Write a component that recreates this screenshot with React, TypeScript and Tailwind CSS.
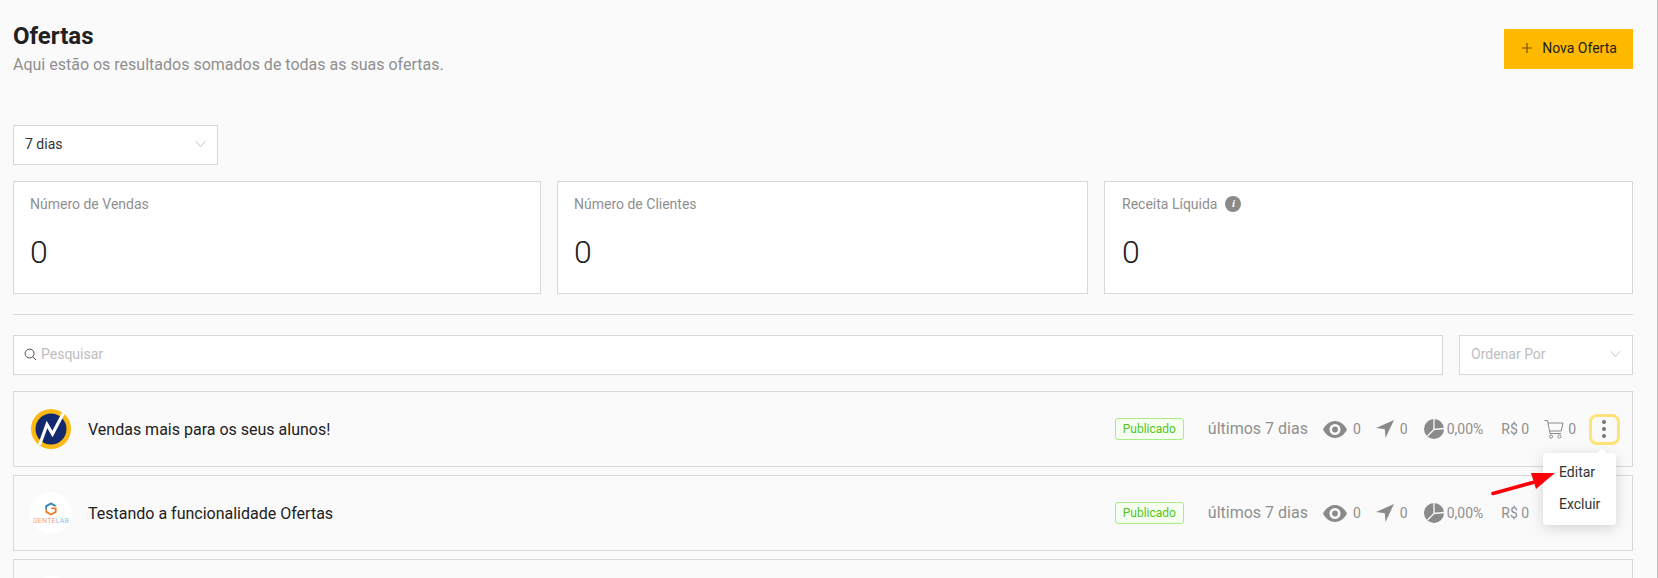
import React from "react";

const offers = [
  { name: "Vendas mais para os seus alunos!", logo: "n" },
  { name: "Testando a funcionalidade Ofertas", logo: "g" },
];

function Chevron({ className }: { className: string }) {
  return (
    <svg viewBox="0 0 12 8" className={className} fill="none" stroke="currentColor" strokeWidth="0.9">
      <path d="M1 1l5 6 5-6" />
    </svg>
  );
}

function NLogo() {
  return (
    <svg viewBox="0 0 40 40" className="w-10 h-10 shrink-0">
      <circle cx="20" cy="20" r="20" fill="#fdb913" />
      <circle cx="20" cy="20" r="15.5" fill="#12296e" />
      <path d="M8.5 36L16 15.5 21.5 25 33 3" fill="none" stroke="#fff" strokeWidth="3.2" />
    </svg>
  );
}

function GLogo() {
  return (
    <div className="w-[42px] h-[42px] -ml-[1px] -mr-[1px] rounded-full bg-white shrink-0 flex flex-col items-center justify-center">
      <svg viewBox="0 0 14 14" className="w-[14px] h-[14px]">
        <path d="M7 0.5L12.5 3.5 10.8 4.5 7 2.6 3 4.8V9.2L7 11.4 10.8 9.4V7H7.2V5.6H12.6V10.5L7 13.5 1.4 10.5V3.5z" fill="#ee7a24" />
        <path d="M7 0.5L12.5 3.5 10.8 4.5 7 2.6 3 4.8V7H1.4V3.5z" fill="#2f8fc9" />
      </svg>
      <div className="text-[7px] leading-[8px] tracking-[0.2px] mt-[1px] whitespace-nowrap">
        <span className="text-[#f2a27a]">GENTE</span>
        <span className="text-[#8cc4e8]">LAB</span>
      </div>
    </div>
  );
}

function EyeIcon() {
  return (
    <svg viewBox="0 0 24 17" className="w-6 h-[17px] shrink-0" fill="#8a8a8a">
      <path
        fillRule="evenodd"
        d="M12 0C6.5 0 2.4 3.8 0 8.5 2.4 13.2 6.5 17 12 17s9.6-3.8 12-8.5C21.6 3.8 17.5 0 12 0zm0 3a5.5 5.5 0 110 11 5.5 5.5 0 010-11zm0 2.6a2.9 2.9 0 100 5.8 2.9 2.9 0 000-5.8z"
      />
    </svg>
  );
}

function SendIcon() {
  return (
    <svg viewBox="0 0 18 18" className="w-[18px] h-[18px] shrink-0" fill="#8a8a8a">
      <path d="M18 0L9.5 18 8.8 9.2 0 8z" />
    </svg>
  );
}

function PieIcon() {
  return (
    <svg viewBox="0 0 20 20" className="w-5 h-5 shrink-0">
      <circle cx="10" cy="10" r="10" fill="#8a8a8a" />
      <path d="M10 0V10.5L20 9.5M10 10.5L3.5 17" fill="none" stroke="#fafafa" strokeWidth="1.3" />
    </svg>
  );
}

function CartIcon() {
  return (
    <svg viewBox="0 0 20 20" className="w-5 h-5 shrink-0" fill="none" stroke="#8a8a8a" strokeWidth="1">
      <path d="M0.5 1.5H3.5L6 14.5H17" />
      <path d="M4 4H19L17.2 12H5.5" />
      <circle cx="7" cy="17.5" r="1.6" />
      <circle cx="15.5" cy="17.5" r="1.6" />
    </svg>
  );
}

function OfferRow({ name, logo, open }: { name: string; logo: string; open?: boolean }) {
  return (
    <div className="relative h-[76px] border border-[#d8d8d8] flex items-center pl-[17px] pr-[12px]">
      {logo === "n" ? <NLogo /> : <GLogo />}
      <div className="ml-[17px] mt-[2px] text-base text-[#212121]">{name}</div>
      <div className="ml-auto flex items-center text-sm text-[#8f8f8f]">
        <span className="h-[22px] w-[69px] flex items-center justify-center rounded-[3px] border border-[#a8ec8a] bg-[#f6fff0] text-xs text-[#52c41a]">
          Publicado
        </span>
        <span className="ml-6 text-base">últimos 7 dias</span>
        <span className="ml-[15px]"><EyeIcon /></span>
        <span className="ml-[6px]">0</span>
        <span className="ml-[15px]"><SendIcon /></span>
        <span className="ml-[6px]">0</span>
        <span className="ml-[16px]"><PieIcon /></span>
        <span className="ml-[3px]">0,00%</span>
        <span className="ml-[18px]">R$ 0</span>
        {/* the open menu of the row above lies over these */}
        <span className={open ? "ml-[15px] flex items-center" : "ml-[15px] flex items-center invisible"}>
          <CartIcon />
          <span className="ml-[4px]">0</span>
        </span>
        <span
          className={
            open
              ? "ml-[13px] w-[31px] h-[31px] rounded-lg border-[3px] border-[#ffe27a] flex flex-col items-center justify-center gap-[3px] pr-[1px]"
              : "ml-[13px] w-[31px] h-[31px] flex flex-col items-center justify-center gap-[3px] invisible"
          }
        >
          <i className="block w-1 h-1 rounded-full bg-[#757575]" />
          <i className="block w-1 h-1 rounded-full bg-[#757575]" />
          <i className="block w-1 h-1 rounded-full bg-[#757575]" />
        </span>
      </div>
      {open && (
        <>
          <div className="absolute z-20 top-[61px] right-[16px] w-[73px] h-[72px] rounded-[4px] bg-white shadow-[0_3px_14px_rgba(0,0,0,0.16)] pl-[16px] pt-[3px] text-sm leading-[32px] text-[#333333]">
            <div className="absolute -top-[3px] right-[10px] w-2 h-2 rotate-45 bg-white" />
            <div>Editar</div>
            <div>Excluir</div>
          </div>
          <svg viewBox="0 0 66 26" className="absolute z-30 top-[78px] right-[75px] w-[66px] h-[26px]">
            <path d="M2 23.5L42 12.5" stroke="#fb0007" strokeWidth="3.6" strokeLinecap="round" fill="none" />
            <path d="M64 3L40 3 45 19z" fill="#fb0007" />
          </svg>
        </>
      )}
    </div>
  );
}

function StatCard({ label, info }: { label: string; info?: boolean }) {
  return (
    <div className={info ? "h-[113px] bg-white border border-[#d8d8dc] pl-[17px] pt-[12px]" : "h-[113px] bg-white border border-[#d8d8dc] pl-[16px] pt-[12px]"}>
      <div className="flex items-center h-[20px] text-sm text-[#8f8f8f]">
        {label}
        {info && (
          <span className="ml-2 w-4 h-4 rounded-full bg-[#8a8a8a] text-white flex items-center justify-center text-[11px] font-bold italic font-['Liberation_Serif',serif]">
            i
          </span>
        )}
      </div>
      <div className="mt-[18px] text-[32px] leading-[40px] font-light text-[#212121]">0</div>
    </div>
  );
}

export default function App() {
  return (
    <div className="h-[578px] overflow-hidden bg-[#fafafa] border-r border-[#bdbdbd] pl-[13px] pr-[24px] font-[Roboto,sans-serif]">
      {/* Header */}
      <div className="flex items-start justify-between pt-[22px] h-[76px]">
        <div>
          <h1 className="text-2xl leading-[28px] font-bold text-[#212121]">Ofertas</h1>
          <p className="mt-[3px] text-base leading-6 text-[#8f8f8f]">
            Aqui estão os resultados somados de todas as suas ofertas.
          </p>
        </div>
        <button className="mt-[7px] w-[129px] h-10 bg-[#ffba00] flex items-center justify-center gap-[9px] pb-[2px] pl-[1px] text-sm text-[#212121]">
          <svg viewBox="0 0 12 12" className="w-3 h-3 text-[#705000]" fill="none" stroke="currentColor" strokeWidth="1.2">
            <path d="M6 1v10M1 6h10" />
          </svg>
          Nova Oferta
        </button>
      </div>

      <div className="mt-[49px] w-[205px] h-10 bg-white border border-[#d8d8dc] flex items-center justify-between pl-[11px] pr-[11px] pb-[2px] text-sm text-[#333333]">
        7 dias
        <Chevron className="w-[11px] h-2 text-[#b8b8b8]" />
      </div>

      <div className="mt-4 grid grid-cols-[528px_531px_1fr] gap-4">
        <StatCard label="Número de Vendas" />
        <StatCard label="Número de Clientes" />
        <StatCard label="Receita Líquida" info />
      </div>

      <div className="mt-5 border-t border-[#d8d8d8]" />

      {/* Search */}
      <div className="mt-5 flex gap-4">
        <div className="flex-1 h-10 bg-white border border-[#d8d8d8] flex items-center pl-[10px] pb-[2px] gap-[4px] text-sm text-[#bdbdbd]">
          <svg viewBox="0 0 14 14" className="w-[13px] h-[13px] text-[#444444]" fill="none" stroke="currentColor" strokeWidth="1">
            <circle cx="6" cy="6" r="4.8" />
            <path d="M9.5 9.5L13 13" />
          </svg>
          Pesquisar
        </div>
        <div className="w-[174px] h-10 bg-white border border-[#d8d8d8] flex items-center justify-between pl-[11px] pr-[11px] pb-[2px] text-sm text-[#bdbdbd]">
          Ordenar Por
          <Chevron className="w-[11px] h-2 text-[#b8b8b8]" />
        </div>
      </div>

      {/* Offers */}
      <div className="mt-4 flex flex-col gap-2">
        <OfferRow name={offers[0].name} logo={offers[0].logo} open />
        <OfferRow name={offers[1].name} logo={offers[1].logo} />
        <div className="h-[76px] border border-[#d8d8d8] pl-[17px] pt-4">
          <div className="w-[42px] h-[42px] rounded-full bg-white" />
        </div>
      </div>
    </div>
  );
}
